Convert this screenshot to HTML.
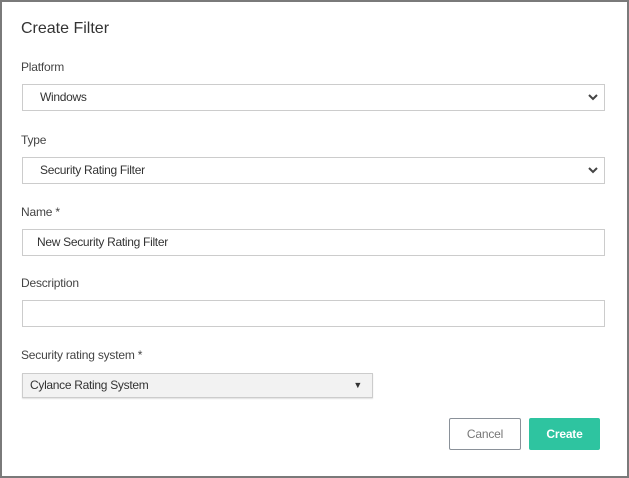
<!DOCTYPE html>
<html><head><style>
*{box-sizing:border-box;margin:0;padding:0}
body{width:629px;height:478px;background:#fff;font-family:"Liberation Sans",sans-serif;position:relative;overflow:hidden}
.frame{position:absolute;left:0;top:0;width:629px;height:478px;border:2px solid #7a7a7a}
.t{position:absolute;color:#333}
.lbl{position:absolute;left:21px;font-size:12px;color:#444;letter-spacing:-0.2px}
.box{position:absolute;left:22px;width:583px;height:27px;border:1px solid #ccc;background:#fff;font-size:12px;color:#333;padding-left:17px;line-height:25px;letter-spacing:-0.3px}
.chev{position:absolute;right:6px;top:8px}
.btn{position:absolute;top:418px;height:32px;font-size:12px;line-height:30px;text-align:center;border-radius:2px;letter-spacing:-0.2px}
</style></head><body>
<div class="frame"></div>
<div class="t" style="left:21px;top:20px;font-size:16px;color:#333">Create Filter</div>
<div class="lbl" style="top:60px">Platform</div>
<div class="box" style="top:84px">Windows<svg class="chev" width="10" height="8" viewBox="0 0 10 8"><path d="M1 2l4 4 4-4" stroke="#444" stroke-width="2" fill="none"/></svg></div>
<div class="lbl" style="top:133px">Type</div>
<div class="box" style="top:157px">Security Rating Filter<svg class="chev" width="10" height="8" viewBox="0 0 10 8"><path d="M1 2l4 4 4-4" stroke="#444" stroke-width="2" fill="none"/></svg></div>
<div class="lbl" style="top:205px">Name *</div>
<div class="box" style="top:229px;padding-left:14px">New Security Rating Filter</div>
<div class="lbl" style="top:276px">Description</div>
<div class="box" style="top:300px"></div>
<div class="lbl" style="top:348px">Security rating system *</div>
<div style="position:absolute;left:22px;top:373px;width:351px;height:25px;border:1px solid #ccc;background:#f2f2f2;box-shadow:0 1px 1px rgba(0,0,0,.12);font-size:12px;color:#333;padding-left:7px;line-height:23px;letter-spacing:-0.3px">Cylance Rating System<span style="position:absolute;right:10px;top:0;font-size:9px">▼</span></div>
<div class="btn" style="left:449px;width:72px;border:1px solid #8a9199;color:#777;background:#fff">Cancel</div>
<div class="btn" style="left:529px;width:71px;background:#2ec4a0;color:#fff;font-weight:bold;line-height:32px">Create</div>
</body></html>
